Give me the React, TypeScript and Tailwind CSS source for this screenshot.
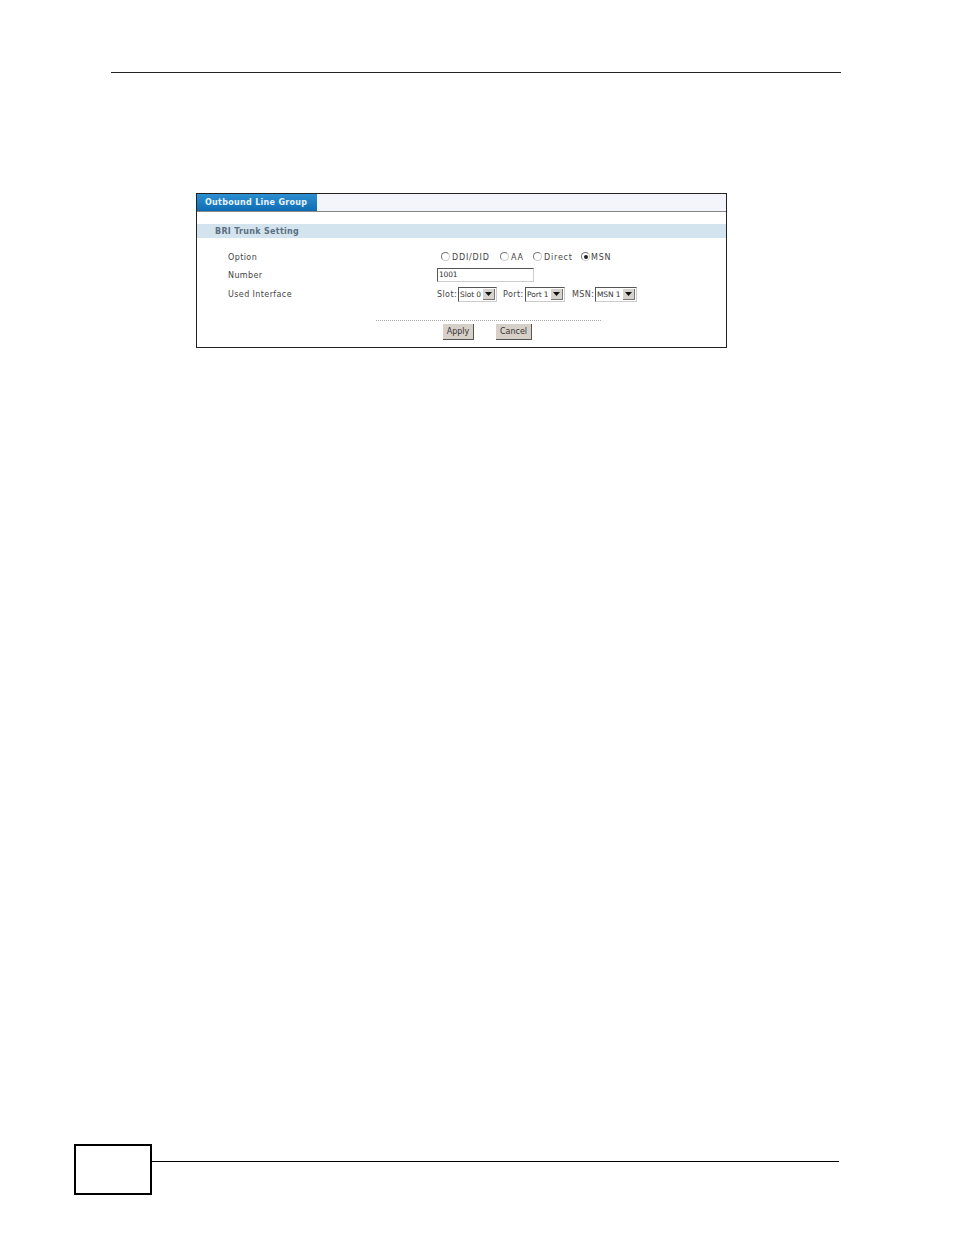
const font = "[font-family:'DejaVu_Sans',Verdana,sans-serif]";

function Radio({ checked }: { checked?: boolean }) {
  return (
    <span className="mb-[3px] flex h-[9px] w-[9px] items-center justify-center rounded-full border border-t-[#777777] border-l-[#777777] border-r-[#cccccc] border-b-[#cccccc] bg-white">
      {checked && <span className="h-[4px] w-[4px] rounded-full bg-[#222222]" />}
    </span>
  );
}

function Select({ label, width }: { label: string; width: string }) {
  return (
    <div className={`flex h-[15px] items-center justify-between border border-t-[#555555] border-l-[#555555] border-r-[#cccccc] border-b-[#cccccc] bg-white pl-px pr-[1px] ${width}`}>
      <span className="whitespace-nowrap text-[7.5px] leading-none tracking-[-0.1px] text-[#333333]">{label}</span>
      <span className="flex h-[11px] w-[12px] shrink-0 items-center justify-center border-r border-b border-r-[#777777] border-b-[#777777] bg-[#d6d3ce]">
        <svg width="7" height="4" viewBox="0 0 7 4">
          <path d="M0 0h7L3.5 4z" fill="#111111" />
        </svg>
      </span>
    </div>
  );
}

function Button({ label, width }: { label: string; width: string }) {
  return (
    <div className={`flex h-[16px] items-center justify-center border-r border-b border-r-[#555555] border-b-[#555555] bg-[#d6d0c8] text-[8px] leading-none text-[#333333] ${width}`}>
      {label}
    </div>
  );
}

export default function App() {
  return (
    <div className={`h-[1235px] w-[954px] overflow-hidden bg-white pt-[72px] ${font}`}>
      <div className="ml-[111px] h-px w-[730px] bg-[#222222]" />

      <div className="ml-[196px] mt-[120px] h-[155px] w-[531px] border border-[#222222] bg-white">
        <div className="flex h-[18px] border-b border-[#888888] bg-[#f4f5fa]">
          <div className="flex w-[120px] items-center bg-gradient-to-b from-[#2b8fd0] to-[#0f6cb4] pl-[8px] text-[8px] font-bold tracking-[0.3px] text-[#e8f4fb]">
            Outbound Line Group
          </div>
        </div>

        <div className="mt-[12px] flex h-[14px] items-center bg-[#d3e4ef] pl-[18px] pt-[2px] text-[8px] font-bold tracking-[0.3px] text-[#5c6f80]">
          BRI Trunk Setting
        </div>

        <div className="mt-[14px] flex h-[12px] items-center text-[8px] tracking-[0.4px] text-[#444444]">
          <div className="w-[240px] pl-[31px]">Option</div>
          <div className="flex items-center pl-[4px] tracking-[0.8px]">
            <Radio />
            <span className="ml-[2px] w-[48px]">DDI/DID</span>
            <Radio />
            <span className="ml-[2px] w-[22px]">AA</span>
            <Radio />
            <span className="ml-[2px] w-[37px]">Direct</span>
            <Radio checked />
            <span className="ml-[1px]">MSN</span>
          </div>
        </div>

        <div className="mt-[3px] flex h-[16px] items-center text-[8px] tracking-[0.4px] text-[#444444]">
          <div className="w-[240px] pl-[31px] pt-px">Number</div>
          <div className="flex h-[14px] w-[97px] items-center border border-t-[#555555] border-l-[#555555] border-r-[#cccccc] border-b-[#cccccc] pl-px text-[7.5px] tracking-[-0.2px] text-[#333333]">
            1001
          </div>
        </div>

        <div className="mt-[4px] flex h-[15px] items-center text-[8px] tracking-[0.4px] text-[#444444]">
          <div className="w-[240px] pl-[31px]">Used Interface</div>
          <div className="flex items-center">
            <span className="w-[21px]">Slot:</span>
            <Select label="Slot 0" width="w-[39px]" />
            <span className="ml-[6px] w-[22px]">Port:</span>
            <Select label="Port 1" width="w-[40px]" />
            <span className="ml-[7px] w-[23px]">MSN:</span>
            <Select label="MSN 1" width="w-[42px]" />
          </div>
        </div>

        <div className="ml-[179px] mt-[18px] w-[225px] border-t border-dotted border-[#aaaaaa]" />

        <div className="ml-[246px] mt-[3px] flex gap-[22px]">
          <Button label="Apply" width="w-[31px]" />
          <Button label="Cancel" width="w-[36px]" />
        </div>
      </div>

      <div className="ml-[74px] mt-[796px] flex items-start">
        <div className="h-[51px] w-[78px] border-2 border-black" />
        <div className="mt-[17px] h-px w-[687px] bg-black" />
      </div>
    </div>
  );
}
